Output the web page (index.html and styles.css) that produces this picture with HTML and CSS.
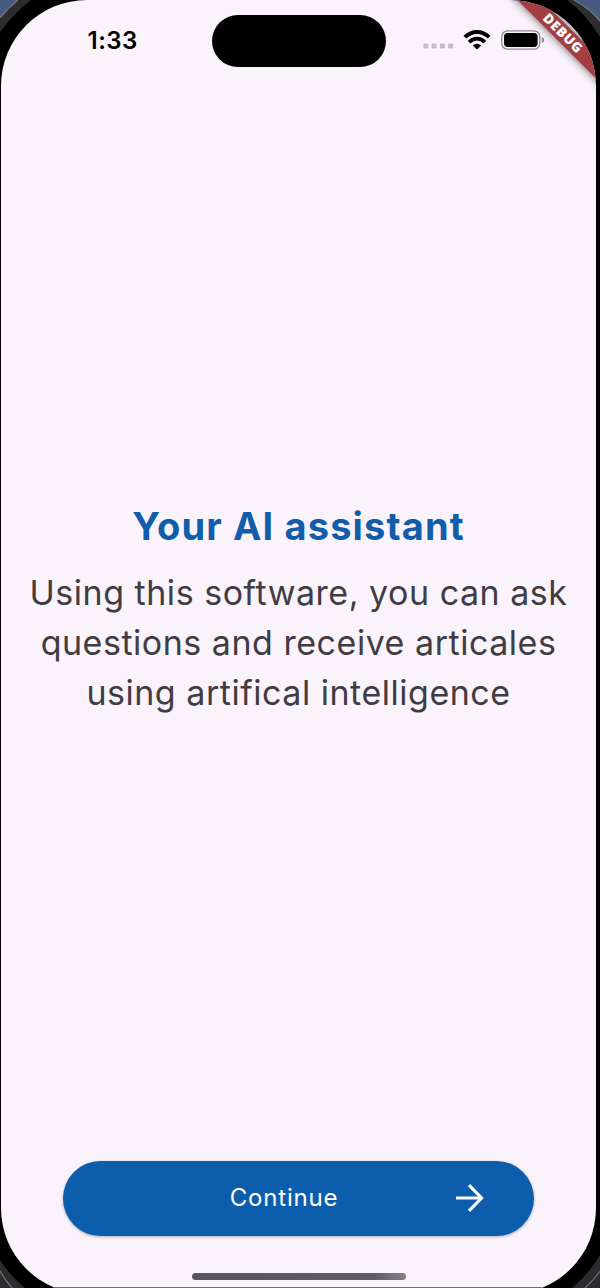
FILE: index.html
```html
<!DOCTYPE html>
<html lang="en">
<head>
<meta charset="utf-8">
<title>Your AI assistant</title>
<link rel="stylesheet" href="styles.css">
</head>
<body>
<div class="device">
  <svg class="bezel" viewBox="0 0 600 1288" aria-hidden="true">
    <rect width="600" height="1288" fill="#000"/>
    <path d="M0 0H31Q14 13 0 32ZM600 0H567Q586 14 600 37ZM0 1288V1260Q10 1276 25 1288ZM600 1288V1255Q589 1274 572 1288Z" fill="#2c2b2d"/>
    <path d="M0 0H18Q8 8 0 18ZM600 0H574Q589 8 600 21Z" fill="#47597f"/>
    <path d="M18 0Q8 8 0 18M574 0Q589 8 600 21M0 1271Q5 1280 12 1288M600 1271Q594 1280 585 1288" fill="none" stroke="#777579" stroke-width="1.2"/>
  </svg>
  <div class="screen">
    <header class="status">
      <time class="clock">1:33</time>
      <div class="island"></div>
      <div class="indicators">
        <svg class="cell" viewBox="0 0 32 6" fill="#c3bec6"><rect x="0.3" y="0.5" width="5" height="5" rx="1.2"/><rect x="8.6" y="0.5" width="5" height="5" rx="1.2"/><rect x="16.9" y="0.5" width="5" height="5" rx="1.2"/><rect x="25.2" y="0.5" width="5" height="5" rx="1.2"/></svg>
        <svg class="wifi" viewBox="0 0 28 20" fill="none" stroke="#000" stroke-width="3.8"><path d="M1.8 7.2Q7.2 2 14 2T26.2 7.2"/><path d="M6.2 12.2Q9.4 8.7 14 8.7T21.8 12.2"/><path d="M14 19.6L9.7 15.5Q14 12 18.3 15.5Z" fill="#000" stroke="none"/></svg>
        <svg class="battery" viewBox="0 0 44 20"><rect x=".8" y=".8" width="38" height="18.4" rx="5.8" fill="none" stroke="#8e8991" stroke-width="1.3"/><rect x="3" y="3" width="33.6" height="14" rx="3.7"/><path d="M40.8 6.8Q43.2 7.6 43.2 10T40.8 13.2Z" fill="#8e8991"/></svg>
      </div>
    </header>
    <main class="intro">
      <h1 class="title">Your AI assistant</h1>
      <p class="lead">Using this software, you can ask<br>questions and receive articales<br>using artifical intelligence</p>
    </main>
    <footer class="actions">
      <button class="continue">
        <span class="label">Continue</span>
        <svg class="arrow" viewBox="0 0 28 28" fill="none" stroke="#fff" stroke-width="3.2"><path d="M0 14H25M13 1.2L25.5 14L13 26.8"/></svg>
      </button>
      <div class="home"></div>
    </footer>
    <div class="debug">DEBUG</div>
  </div>
  <div class="edge"></div>
</div>
</body>
</html>
```
FILE: styles.css
```css
* { box-sizing: border-box; }
body { margin: 0; background: #000; font-family: Inter, "Liberation Sans", sans-serif; }
.device { position: relative; height: 1288px; padding-left: 1px; overflow: hidden; }
.bezel { position: absolute; top: 0; left: 0; width: 600px; height: 1288px; }
.screen {
  position: relative; display: flex; flex-direction: column;
  width: 595px; height: 1294px; overflow: hidden;
  border-radius: 86px; background: #faf3fc;
}
.status { display: grid; grid-template-columns: 210.5px 174.5px 1fr; height: 82px; padding-top: 15.4px; }
.clock { padding: 11px 0 0 86.5px; font-size: 24px; line-height: 30px; font-weight: 600; letter-spacing: .5px; }
.island { height: 51.4px; border-radius: 26px; background: #000; }
.indicators { display: flex; align-items: flex-start; padding: 14.6px 0 0 37px; }
.cell { width: 32px; height: 6px; margin-top: 13px; }
.wifi { width: 28px; height: 20px; margin-left: 8px; }
.battery { width: 44px; height: 20px; margin-left: 9.5px; }
.intro { flex: 1; padding-top: 420px; text-align: center; white-space: nowrap; }
.title { margin: 0; color: #115dab; font-size: 38px; line-height: 48px; font-weight: 650; letter-spacing: 1.15px; }
.lead { margin: 18px 0 0; color: #413c43; font-size: 34px; line-height: 50px; letter-spacing: .52px; }
.actions { display: flex; flex-direction: column; align-items: center; height: 133.5px; }
.continue {
  display: grid; grid-template-columns: 1fr auto 1fr; align-items: center;
  width: 471px; height: 75px; padding: 0 50px 0 21px; border: 0; border-radius: 38px;
  background: #0c5dab; color: #fff; font: 400 24px/30px Inter, sans-serif; letter-spacing: .8px;
  box-shadow: 0 1px 3px rgba(0,0,0,.3);
}
.label { grid-column: 2; }
.arrow { grid-column: 3; justify-self: end; width: 28px; height: 28px; }
.home { width: 214px; height: 7px; margin-top: 37px; border-radius: 4px; background: linear-gradient(90deg, #59565b, #605d62 85%, #858187); }
.debug {
  position: absolute; top: 24px; left: 481px; width: 160px; height: 16.5px;
  background: #a33f42; color: #fff; text-align: center;
  font: 900 13.5px/16.5px "Open Sans", Inter, sans-serif; letter-spacing: .7px; text-indent: 3px;
  transform: rotate(45deg); box-shadow: 0 0 10px rgba(0,0,0,.6);
}
.edge { position: absolute; left: 54px; right: 58px; top: 1287px; height: 1px; background: #737074; }
```
